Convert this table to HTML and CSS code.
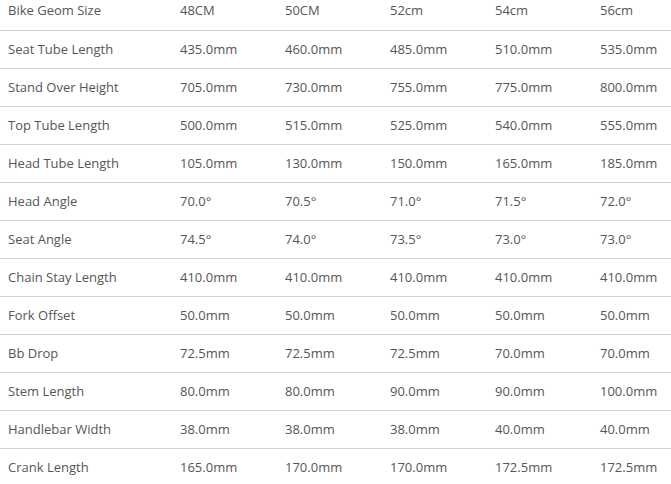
FILE: index.html
```html
<!DOCTYPE html>
<html>
<head>
<meta charset="utf-8">
<link rel="stylesheet" href="styles.css">
</head>
<body>
<div class="geom">
  <div class="row first"><div class="cell">Bike Geom Size</div><div class="cell">48CM</div><div class="cell">50CM</div><div class="cell">52cm</div><div class="cell">54cm</div><div class="cell">56cm</div></div>
  <div class="row"><div class="cell">Seat Tube Length</div><div class="cell">435.0mm</div><div class="cell">460.0mm</div><div class="cell">485.0mm</div><div class="cell">510.0mm</div><div class="cell">535.0mm</div></div>
  <div class="row"><div class="cell">Stand Over Height</div><div class="cell">705.0mm</div><div class="cell">730.0mm</div><div class="cell">755.0mm</div><div class="cell">775.0mm</div><div class="cell">800.0mm</div></div>
  <div class="row"><div class="cell">Top Tube Length</div><div class="cell">500.0mm</div><div class="cell">515.0mm</div><div class="cell">525.0mm</div><div class="cell">540.0mm</div><div class="cell">555.0mm</div></div>
  <div class="row"><div class="cell">Head Tube Length</div><div class="cell">105.0mm</div><div class="cell">130.0mm</div><div class="cell">150.0mm</div><div class="cell">165.0mm</div><div class="cell">185.0mm</div></div>
  <div class="row"><div class="cell">Head Angle</div><div class="cell">70.0°</div><div class="cell">70.5°</div><div class="cell">71.0°</div><div class="cell">71.5°</div><div class="cell">72.0°</div></div>
  <div class="row"><div class="cell">Seat Angle</div><div class="cell">74.5°</div><div class="cell">74.0°</div><div class="cell">73.5°</div><div class="cell">73.0°</div><div class="cell">73.0°</div></div>
  <div class="row"><div class="cell">Chain Stay Length</div><div class="cell">410.0mm</div><div class="cell">410.0mm</div><div class="cell">410.0mm</div><div class="cell">410.0mm</div><div class="cell">410.0mm</div></div>
  <div class="row"><div class="cell">Fork Offset</div><div class="cell">50.0mm</div><div class="cell">50.0mm</div><div class="cell">50.0mm</div><div class="cell">50.0mm</div><div class="cell">50.0mm</div></div>
  <div class="row"><div class="cell">Bb Drop</div><div class="cell">72.5mm</div><div class="cell">72.5mm</div><div class="cell">72.5mm</div><div class="cell">70.0mm</div><div class="cell">70.0mm</div></div>
  <div class="row"><div class="cell">Stem Length</div><div class="cell">80.0mm</div><div class="cell">80.0mm</div><div class="cell">90.0mm</div><div class="cell">90.0mm</div><div class="cell">100.0mm</div></div>
  <div class="row"><div class="cell">Handlebar Width</div><div class="cell">38.0mm</div><div class="cell">38.0mm</div><div class="cell">38.0mm</div><div class="cell">40.0mm</div><div class="cell">40.0mm</div></div>
  <div class="row"><div class="cell">Crank Length</div><div class="cell">165.0mm</div><div class="cell">170.0mm</div><div class="cell">170.0mm</div><div class="cell">172.5mm</div><div class="cell">172.5mm</div></div>
</div>
</body>
</html>
```
FILE: styles.css
```css
html, body {
  margin: 0;
  padding: 0;
  overflow: hidden;
  background: #ffffff;
}
body {
  font-family: "Open Sans", "Noto Sans", sans-serif;
  font-size: 13px;
  color: #565656;
}
.geom {
  display: flex;
  flex-direction: column;
  width: 700px;
}
.row {
  display: grid;
  grid-template-columns: 172px repeat(5, 105px);
  height: 38px;
  align-items: center;
  border-top: 1px solid #d2d2d2;
  box-sizing: border-box;
  padding-bottom: 2px;
}
.row.first {
  height: 30px;
  border-top: none;
  align-items: start;
  padding-top: 1px;
  padding-bottom: 0;
}
.cell {
  padding-left: 8px;
  line-height: 18px;
  white-space: nowrap;
}
```
